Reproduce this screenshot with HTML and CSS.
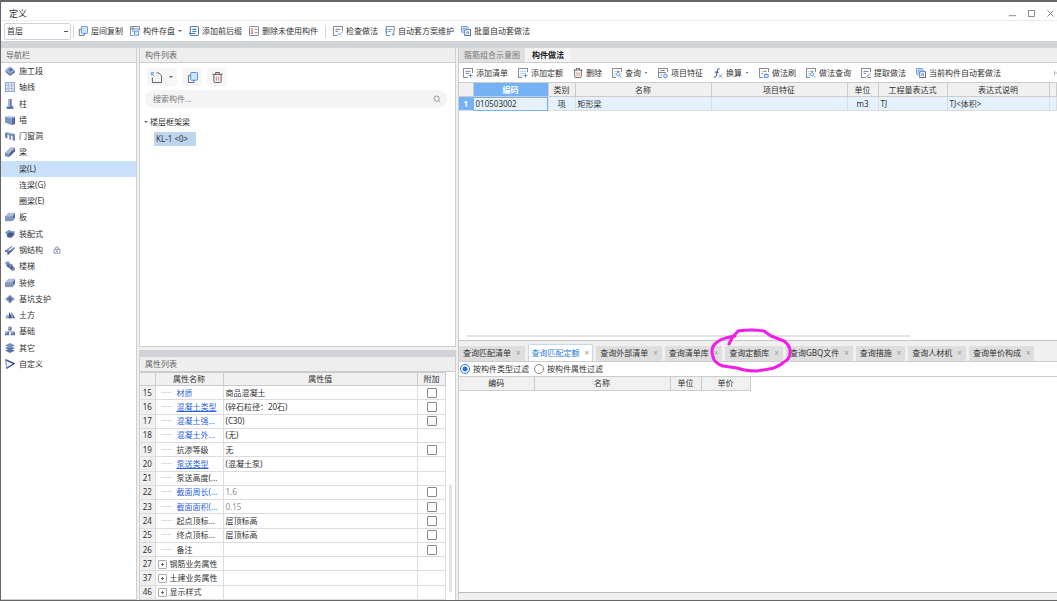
FILE: index.html
```html
<!DOCTYPE html>
<html lang="zh-CN">
<head>
<meta charset="utf-8">
<title>定义</title>
<link rel="stylesheet" href="styles.css">
</head>
<body>
<svg class="defs" aria-hidden="true">
  <symbol id="copy" viewBox="0 0 12 12"><path d="M3.500 4H1.500v7.500h6V9.500" fill="none" stroke="#4b5d78"/><rect x="4" y=".5" width="7.500" height="8.500" rx="1" fill="#cfe3fb" stroke="#3f86dc"/></symbol>
  <symbol id="save" viewBox="0 0 12 12"><path d="M4 11.500H.5V.5h11V5M.5 3.500h11M3.500.500v7" fill="none" stroke="#5a6f8e"/><rect x="5.500" y="6" width="5" height="5" fill="#dcebfc" stroke="#3f86dc"/></symbol>
  <symbol id="lines" viewBox="0 0 12 12"><rect x="1.500" y=".5" width="10" height="11" rx="1" fill="#fff" stroke="#34507c"/><path d="M4 4h5M4 6.500h5M0 9h8" stroke="#2f80e0" stroke-width="1.300"/></symbol>
  <symbol id="unused" viewBox="0 0 12 12"><rect x=".5" y=".5" width="11" height="11" rx="1" fill="#fff" stroke="#5d6675"/><path d="M2.500 3.500h2.500M2.500 6h2.500M2.500 8.500h2.500" stroke="#d64545" stroke-width="1.300"/><path d="M7 4h3M7 8h3" stroke="#5d6675"/></symbol>
  <symbol id="check" viewBox="0 0 12 12"><path d="M5.500 11.500H.5V.5h11V6M3 4h6M3 6.500h3" fill="none" stroke="#5d6675"/><path d="M5.500 8.500l2 2L11.500 7" fill="none" stroke="#3f86dc"/></symbol>
  <symbol id="auto" viewBox="0 0 12 12"><path d="M6 11.500H1.500V.5h9.500v6M4 4h5M4 6.500h3" fill="none" stroke="#5a6f8e"/><path d="M0 4h3M0 7h3M10 6v5M8 9l2 2 2-2" fill="none" stroke="#3f86dc"/></symbol>
  <symbol id="batch" viewBox="0 0 12 12"><path d="M.5 8V.500H8M2.500 9V2.500H10" fill="none" stroke="#3f86dc"/><rect x="4.500" y="4.500" width="7" height="7" fill="#fff" stroke="#4b5d78"/><path d="M7 10V7h2v3" fill="none" stroke="#3f86dc"/></symbol>
  <symbol id="addlist" viewBox="0 0 12 12"><path d="M6 11.500H.5V.5h11V6M3 4h6M3 6.500h4" fill="none" stroke="#5d6675"/><path d="M9 6.500v5M6.500 9h5" stroke="#3f86dc"/></symbol>
  <symbol id="addquota" viewBox="0 0 12 12"><path d="M5 11.500H.5V.5h11V5" fill="none" stroke="#5d6675"/><path d="M3 4h7M3 6.500h5M3 9h2" stroke="#3f86dc" stroke-dasharray="1 1"/><path d="M9 6.500v5M6.500 9h5" stroke="#3f86dc"/></symbol>
  <symbol id="trash" viewBox="0 0 12 12"><path d="M.5 2.500h11M4 2.500v-2h4v2M2 2.500v7.500q0 1.500 1.500 1.500h5q1.500 0 1.500-1.500V2.500" fill="none" stroke="#55504f"/><path d="M4.700 5v4.500M7.300 5v4.500" stroke="#dd6b6b"/></symbol>
  <symbol id="find" viewBox="0 0 12 12"><path d="M5 11.500H.5V.5h11V5M3 4h1M5.500 4H9M3 6.500h1M3 9h1" fill="none" stroke="#5d6675"/><circle cx="7.500" cy="7.500" r="2" fill="#fff" stroke="#3f86dc"/><path d="M9 9l2.500 2.500" stroke="#3f86dc"/></symbol>
  <symbol id="feature" viewBox="0 0 12 12"><path d="M5 11.500H.5V.5h11V5M.5 5.500h9M3 3h5M3 8.500h2" fill="none" stroke="#5d6675"/><rect x="7" y="7.500" width="4" height="4" rx="1" fill="#dcebfc" stroke="#3f86dc"/></symbol>
  <symbol id="fx" viewBox="0 0 12 12"><path d="M8 1Q5.800 0 5.300 2.500L4 9.500q-.5 2-3 1.500M2 5h5" fill="none" stroke="#34507c" stroke-width="1.200"/><path d="M7 7.500l4 4M11 7.500l-4 4" stroke="#3f86dc"/></symbol>
  <symbol id="brush" viewBox="0 0 12 12"><path d="M5 11.500H.5V.5h11V5M3 4h1M5.500 4H9M3 6.500h2" fill="none" stroke="#5d6675"/><path d="M6 8h5.500M8.700 6v2M6.500 8v3.500H11V8" fill="#dcebfc" stroke="#3f86dc"/></symbol>
  <symbol id="extract" viewBox="0 0 12 12"><path d="M6 11.500H.5V.5h11V5M3 4h6M3 6.500h3" fill="none" stroke="#5d6675"/><path d="M6.500 11L11 6.500M8 11.500h3.500" stroke="#44546a"/></symbol>
  <symbol id="new" viewBox="0 0 12 12"><path d="M6 1h2.500L11.500 4v7.500h-10V6" fill="none" stroke="#44546a"/><path d="M0 1l3.500 3.500M0 4V1h3.500" fill="none" stroke="#2f80e0"/></symbol>
  <symbol id="search" viewBox="0 0 12 12"><circle cx="5.500" cy="5.500" r="4" fill="none" stroke="#8b8b8b" stroke-width="1.300"/><path d="M8.500 8.500L11 11" stroke="#8b8b8b" stroke-width="1.300"/></symbol>
  <symbol id="n-stage" viewBox="0 0 12 12"><path d="M0 7l6-6 6 5v2l-6 4z" fill="#6d83b0"/><path d="M0 5l5-4 3 2 4 2-6 4z" fill="#9db0d3"/><path d="M4 5l3-3 3 2-3 3z" fill="#5b74a8"/></symbol>
  <symbol id="n-axis" viewBox="0 0 12 12"><rect x=".5" y=".5" width="11" height="11" fill="#dce5f3" stroke="#8396bb"/><path d="M4 0v12M8 0v12M0 4h12M0 8h12" stroke="#a3b3d2"/></symbol>
  <symbol id="n-col" viewBox="0 0 12 12"><path d="M4 0h4v8l2 1v3H2V9l2-1z" fill="#5e76ac"/><path d="M4 0h2v9l-3 1-1-1 2-1z" fill="#a8b8d8"/></symbol>
  <symbol id="n-wall" viewBox="0 0 12 12"><path d="M0 2l8 2v8L0 9z" fill="#7d92c0"/><path d="M0 2l4-1 8 1-4 2z" fill="#b6c4de"/><path d="M8 4l4-2v9l-4 1z" fill="#556c9f"/></symbol>
  <symbol id="n-door" viewBox="0 0 12 12"><path d="M0 2l12 2v8l-3-1V6L7 5.500V11L5 10V5L3 4.500V9L0 8z" fill="#7388b6"/><path d="M0 2l2-1 10 2v1z" fill="#b6c4de"/></symbol>
  <symbol id="n-beam" viewBox="0 0 12 12"><path d="M0 7l7-7 5 1-7 7z" fill="#aab9d6"/><path d="M0 7l5 1v4l-5-1z" fill="#7489b5"/><path d="M5 8l7-7v4l-7 7z" fill="#485e8c"/></symbol>
  <symbol id="n-slab" viewBox="0 0 12 12"><path d="M0 5l4-4h8L9 5z" fill="#b0bfdb"/><path d="M0 5h9v6H0z" fill="#8196c1"/><path d="M9 5l3-4v6l-3 4z" fill="#5a70a2"/></symbol>
  <symbol id="n-pre" viewBox="0 0 12 12"><path d="M0 4l5-3 2 1 5 1-1 5-4 3-5-1V7z" fill="#8196c1"/><path d="M3 5l5-1 3 2-4 4-4-1z" fill="#435a8c"/></symbol>
  <symbol id="n-steel" viewBox="0 0 12 12"><path d="M0 7l8-6 1 1-7 6zM2 10l9-8 1 2-9 8z" fill="#8196c1"/><path d="M0 6l5 1 7-3-8 8-1-3-3-1z" fill="#5b72a3"/></symbol>
  <symbol id="n-stair" viewBox="0 0 12 12"><path d="M0 2l4-2 2 3 3 1 1 3 2 1v3l-3 1-4-4-3-2z" fill="#7d91bd"/><path d="M4 4l2 1-2 3-2-2zM8 6l2 1-2 4-3-3z" fill="#485e8c"/></symbol>
  <symbol id="n-pit" viewBox="0 0 12 12"><path d="M0 6l6-5 6 5-6 5z" fill="#8fa2c9"/><path d="M3 5h6v2H3zM5 3h2v7H5z" fill="#506798"/></symbol>
  <symbol id="n-earth" viewBox="0 0 12 12"><path d="M0 10l3-5 2 5zM5 10l3-8 4 8z" fill="#8ea0c7"/><path d="M4 10l1-8 2 4 1 4zM9 5l3 5h-2z" fill="#3f5688"/></symbol>
  <symbol id="n-base" viewBox="0 0 12 12"><path d="M4 1h4v4H4zM0 7h5v4H0zM7 7h5v4H7z" fill="#5b73a8"/><path d="M4 1h2v3H4zM0 7h3v2H0zM7 7h3v2H7zM4 5l4 0 1 2H3z" fill="#a0b2d4"/></symbol>
  <symbol id="n-other" viewBox="0 0 12 12"><path d="M0 9l3-1h6l3 1-6 3zM0 6l3-1h6l3 1-6 3z" fill="#5a72a5"/><path d="M0 3l6-3 6 3-6 3z" fill="#7b91bf"/></symbol>
  <symbol id="n-custom" viewBox="0 0 12 12"><path d="M1 1l10 4.500L2 11z" fill="#fff" stroke="#8ca0c6" stroke-width="1.500"/><path d="M1 1l10 4.500L2 11" fill="none" stroke="#415b91" stroke-width="1.500"/></symbol>
  <symbol id="lock" viewBox="0 0 12 12"><path d="M1.500 5h9v6h-9zM4 5V3q0-2 2-2t2 2v2M6 6.500v3M4.500 8h3" fill="none" stroke="#5a6b8f"/></symbol>
</svg>
<div class="window">
  <header class="titlebar">
    <h1>定义</h1>
    <div class="winbtns">
      <button aria-label="最小化"><svg viewBox="0 0 8 8"><path d="M0 6.500h8"/></svg></button>
      <button aria-label="最大化"><svg viewBox="0 0 8 8"><path d="M.5.500h7v7h-7z"/></svg></button>
      <button aria-label="关闭"><svg viewBox="0 0 8 8"><path d="M.5.500l7 7M7.500.500l-7 7"/></svg></button>
    </div>
  </header>
  <div class="toolbar main-tools">
    <select class="floor" aria-label="楼层"><option>首层</option></select>
    <i class="sep"></i>
    <button><svg><use href="#copy"/></svg>层间复制</button>
    <button><svg><use href="#save"/></svg>构件存盘<i class="caret"></i></button>
    <button><svg><use href="#lines"/></svg>添加前后缀</button>
    <button><svg><use href="#unused"/></svg>删除未使用构件</button>
    <i class="sep"></i>
    <button><svg><use href="#check"/></svg>检查做法</button>
    <button><svg><use href="#auto"/></svg>自动套方案维护</button>
    <button><svg><use href="#batch"/></svg>批量自动套做法</button>
  </div>
  <main class="body">
    <section class="panel nav">
      <h2>导航栏</h2>
      <ul>
        <li><svg><use href="#n-stage"/></svg>施工段</li>
        <li><svg><use href="#n-axis"/></svg>轴线</li>
        <li><svg><use href="#n-col"/></svg>柱</li>
        <li><svg><use href="#n-wall"/></svg>墙</li>
        <li><svg><use href="#n-door"/></svg>门窗洞</li>
        <li><svg><use href="#n-beam"/></svg>梁</li>
        <li class="child selected">梁(L)</li>
        <li class="child">连梁(G)</li>
        <li class="child">圈梁(E)</li>
        <li><svg><use href="#n-slab"/></svg>板</li>
        <li><svg><use href="#n-pre"/></svg>装配式</li>
        <li><svg><use href="#n-steel"/></svg>钢结构<svg class="lock"><use href="#lock"/></svg></li>
        <li><svg><use href="#n-stair"/></svg>楼梯</li>
        <li><svg><use href="#n-slab"/></svg>装修</li>
        <li><svg><use href="#n-pit"/></svg>基坑支护</li>
        <li><svg><use href="#n-earth"/></svg>土方</li>
        <li><svg><use href="#n-base"/></svg>基础</li>
        <li><svg><use href="#n-other"/></svg>其它</li>
        <li><svg><use href="#n-custom"/></svg>自定义</li>
      </ul>
    </section>
    <div class="middle">
      <section class="panel list">
        <h2>构件列表</h2>
        <div class="list-tools">
          <button class="wide" aria-label="新建"><svg><use href="#new"/></svg><i class="caret"></i></button>
          <button aria-label="复制"><svg><use href="#copy"/></svg></button>
          <button aria-label="删除"><svg><use href="#trash"/></svg></button>
        </div>
        <label class="search"><input type="text" placeholder="搜索构件..." aria-label="搜索构件"><svg><use href="#search"/></svg></label>
        <div class="tree"><i class="caret"></i>楼层框架梁</div>
        <div class="leaf">KL-1 &lt;0&gt;</div>
      </section>
      <section class="panel props">
        <h2>属性列表</h2>
        <div class="props-body">
        <table>
          <colgroup><col class="p-num"><col class="p-name"><col><col class="p-add"></colgroup>
          <thead><tr><th></th><th>属性名称</th><th>属性值</th><th>附加</th></tr></thead>
          <tbody>
          <tr><th>15</th><td class="name blue">材质</td><td>商品混凝土</td><td><input type="checkbox" aria-label="附加 材质"></td></tr>
          <tr><th>16</th><td class="name blue"><u>混凝土类型</u></td><td>(碎石粒径：20石)</td><td><input type="checkbox" aria-label="附加 混凝土类型"></td></tr>
          <tr><th>17</th><td class="name blue">混凝土强...</td><td>(C30)</td><td><input type="checkbox" aria-label="附加 混凝土强"></td></tr>
          <tr><th>18</th><td class="name blue">混凝土外...</td><td>(无)</td><td></td></tr>
          <tr><th>19</th><td class="name">抗渗等级</td><td>无</td><td><input type="checkbox" aria-label="附加 抗渗等级"></td></tr>
          <tr><th>20</th><td class="name blue"><u>泵送类型</u></td><td>(混凝土泵)</td><td></td></tr>
          <tr><th>21</th><td class="name">泵送高度(...</td><td></td><td></td></tr>
          <tr><th>22</th><td class="name blue">截面周长(...</td><td class="dim">1.6</td><td><input type="checkbox" aria-label="附加 截面周长"></td></tr>
          <tr><th>23</th><td class="name blue">截面面积(...</td><td class="dim">0.15</td><td><input type="checkbox" aria-label="附加 截面面积"></td></tr>
          <tr><th>24</th><td class="name">起点顶标...</td><td>层顶标高</td><td><input type="checkbox" aria-label="附加 起点顶标"></td></tr>
          <tr><th>25</th><td class="name">终点顶标...</td><td>层顶标高</td><td><input type="checkbox" aria-label="附加 终点顶标"></td></tr>
          <tr><th>26</th><td class="name">备注</td><td></td><td><input type="checkbox" aria-label="附加 备注"></td></tr>
          <tr><th>27</th><td class="group"><button aria-label="展开"></button>钢筋业务属性</td><td></td><td></td></tr>
          <tr><th>37</th><td class="group"><button aria-label="展开"></button>土建业务属性</td><td></td><td></td></tr>
          <tr><th>46</th><td class="group"><button aria-label="展开"></button>显示样式</td><td></td><td></td></tr>
          </tbody>
        </table>
        <i class="vbar"></i>
        </div>
      </section>
    </div>
    <div class="right">
      <section class="work">
        <div class="toptabs"><button>箍筋组合示意图</button><button class="on">构件做法</button></div>
        <div class="toolbar work-tools">
          <button><svg><use href="#addlist"/></svg>添加清单</button>
          <button><svg><use href="#addquota"/></svg>添加定额</button>
          <button><svg><use href="#trash"/></svg>删除</button>
          <button><svg><use href="#find"/></svg>查询<i class="caret"></i></button>
          <button><svg><use href="#feature"/></svg>项目特征</button>
          <button><svg><use href="#fx"/></svg>换算<i class="caret"></i></button>
          <button><svg><use href="#brush"/></svg>做法刷</button>
          <button><svg><use href="#find"/></svg>做法查询</button>
          <button><svg><use href="#extract"/></svg>提取做法</button>
          <button><svg><use href="#batch"/></svg>当前构件自动套做法</button>
          <button class="more" aria-label="更多"><svg viewBox="0 0 4 8"><path d="M.5 1v6M.5 4H4"/></svg></button>
        </div>
        <table class="grid">
          <colgroup><col class="g-num"><col class="g-code"><col class="g-kind"><col class="g-name"><col class="g-name"><col class="g-unit"><col class="g-expr"><col class="g-desc"><col></colgroup>
          <thead><tr><th></th><th class="cur">编码</th><th>类别</th><th>名称</th><th>项目特征</th><th>单位</th><th>工程量表达式</th><th>表达式说明</th><th></th></tr></thead>
          <tbody><tr><th class="cur">1</th><td class="focus">010503002</td><td class="mid">项</td><td>矩形梁</td><td></td><td class="mid">m3</td><td>TJ</td><td>TJ&lt;体积&gt;</td><td></td></tr></tbody>
        </table>
        <i class="hbar"></i>
      </section>
      <section class="query">
        <div class="tabs">
          <button>查询匹配清单<i>×</i></button>
          <button class="on">查询匹配定额<i>×</i></button>
          <button>查询外部清单<i>×</i></button>
          <button>查询清单库<i>×</i></button>
          <button class="marked">查询定额库<i>×</i>
            <svg class="mark" viewBox="0 0 84 46" aria-hidden="true"><path d="M20 16L23 10 29 3Q42 1 55 3L62 8 75 13Q82 18 81 25 81 31 75 34 68 40 60 41L48 43Q36 43 28 40L14 38Q5 35 4 29 1 20 7 15 12 10 26 8"/></svg>
          </button>
          <button>查询GBQ文件<i>×</i></button>
          <button>查询措施<i>×</i></button>
          <button>查询人材机<i>×</i></button>
          <button>查询单价构成<i>×</i></button>
        </div>
        <div class="result">
          <div class="filters">
            <label><input type="radio" name="f" checked>按构件类型过滤</label>
            <label><input type="radio" name="f">按构件属性过滤</label>
          </div>
          <table class="heads">
            <colgroup><col class="g-code"><col class="g-name"><col class="g-unit"><col class="q-price"></colgroup>
            <thead><tr><th>编码</th><th>名称</th><th>单位</th><th>单价</th></tr></thead>
          </table>
        </div>
      </section>
    </div>
  </main>
</div>
</body>
</html>
```
FILE: styles.css
```css
* { box-sizing: border-box; }
body {
  margin: 0;
  background: #5c5c5c;
  color: #333;
  font: 8px/12px "Noto Sans", "Noto Sans CJK SC", sans-serif;
}
h1, h2, ul { margin: 0; padding: 0; font-size: 8px; font-weight: normal; list-style: none; }
button, input, select { margin: 0; padding: 0; border: 0; background: none; color: inherit; font: inherit; }
i { font-style: normal; }
.defs { position: absolute; width: 0; height: 0; }

.window {
  display: flex;
  flex-direction: column;
  height: 100vh;
  border: solid #666;
  border-width: 2px 0 1px 1px;
  background: #f0f0f0;
}
.titlebar {
  display: flex;
  justify-content: space-between;
  align-items: center;
  height: 19px;
  padding: 5px 3px 0 8px;
  background: #fff;
  border-bottom: 1px solid #ececec;
  border-radius: 5px 0 0 0;
}
.titlebar h1 { font-size: 9px; }
.winbtns { display: flex; gap: 12px; }
.winbtns svg { display: block; width: 7px; height: 7px; fill: none; stroke: #777; }

.toolbar { display: flex; align-items: center; background: #fff; white-space: nowrap; overflow: hidden; }
.toolbar button { display: flex; flex: none; align-items: center; gap: 3px; }
.toolbar svg { width: 10px; height: 10px; }
.main-tools { flex: none; height: 20px; gap: 7px; padding-left: 3px; }
.floor {
  width: 67px;
  height: 17px;
  padding-left: 2px;
  border: 1px solid #d4d4d4;
  border-radius: 2px;
  appearance: none;
  background: linear-gradient(#555, #555) 59px 7px / 4px 1px no-repeat;
}
.sep { width: 1px; height: 13px; background: #d8d8d8; }
.floor + .sep { margin: 0 -3px 0 -5px; }
.caret { flex: none; width: 4px; height: 2px; background: #666; clip-path: polygon(0 0, 100% 0, 50% 100%); }

.body {
  display: grid;
  grid-template-columns: 136px 317px minmax(0, 1fr);
  gap: 2px;
  flex: 1;
  min-height: 0;
  border-top: 7px solid #d1d4d9;
}
.panel { background: #fff; border: 1px solid #d0d0d0; border-top: 0; }
.panel h2 {
  height: 15px;
  padding-left: 5px;
  background: #eee;
  border-bottom: 1px solid #ccc;
  color: #666;
  line-height: 14px;
}

.nav { border-left: 0; }
.nav ul { display: grid; grid-auto-rows: 1fr; height: 309px; }
.nav li { display: flex; align-items: center; gap: 4px; padding-left: 4px; }
.nav li svg { width: 10px; height: 10px; }
.nav li.child { padding-left: 18px; }
.nav li.selected { background: #c8e0f9; }
.nav li svg.lock { width: 8px; height: 8px; margin-left: 6px; }

.middle { display: flex; flex-direction: column; min-height: 0; }
.list { flex: 1; min-height: 0; }
.list-tools { display: flex; gap: 5px; margin: 5px 7px 4px; }
.list-tools button {
  display: flex;
  align-items: center;
  justify-content: center;
  width: 20px;
  height: 18px;
  border-radius: 2px;
  background: #f6f6f6;
}
.list-tools .wide { width: 30px; gap: 7px; }
.list-tools svg { width: 11px; height: 11px; }
.search {
  display: flex;
  align-items: center;
  height: 18px;
  margin: 0 8px 0 5px;
  padding: 0 6px 0 8px;
  border-radius: 9px;
  background: #f4f4f4;
}
.search input { flex: 1; min-width: 0; outline: 0; }
.search input::placeholder { color: #777; opacity: 1; }
.search svg { width: 8px; height: 8px; }
.tree { display: flex; align-items: center; gap: 2px; margin: 8px 0 4px 4px; }
.leaf { width: 42px; height: 14px; margin-left: 14px; padding-left: 2px; border-radius: 1px; background: #bcd6f0; line-height: 14px; }

.props { margin-top: 3px; border-top: 7px solid #d1d3d9; border-bottom: 0; }
.props-body { display: flex; gap: 3px; }
table { border-collapse: collapse; table-layout: fixed; }
th, td { padding: 0 2px; border: 1px solid #dcdcdc; font-weight: normal; text-align: left; white-space: nowrap; overflow: hidden; line-height: 12px; }
thead th { padding: 0; background: #f0f0f0; border-color: #ccc; text-align: center; }
.props table { width: 306px; height: 228px; flex: none; }
.props th:first-child { padding: 0; background: #f0f0f0; border-left: 0; text-align: center; }
.p-num { width: 15px; }
.p-name { width: 68px; }
.p-add { width: 28px; }
.props td:last-child { text-align: center; padding: 0; }
.props input {
  display: block;
  width: 10px;
  height: 10px;
  margin: auto;
  border: 1px solid #888;
  border-radius: 1px;
  appearance: none;
  background: #fff;
}
.name::before { content: ""; display: inline-block; width: 11px; height: 1px; margin: 0 5px 3px 3px; background: #ddd; }
.blue { color: #2b65e0; }
.dim { color: #909090; }
.group button {
  width: 9px;
  height: 9px;
  margin: 0 3px 0 0;
  border: 1px solid #aaa;
  border-radius: 1px;
  vertical-align: -1px;
  background:
    linear-gradient(#666, #666) center / 3px 1px no-repeat,
    linear-gradient(#666, #666) center / 1px 3px no-repeat;
}
.vbar { width: 3px; margin: 112px 0 8px; border-radius: 2px; background: #e2e2e2; }

.right { display: flex; flex-direction: column; min-width: 0; border-left: 1px solid #ccc; }
.work { display: flex; flex-direction: column; flex: 296 1 0; min-height: 0; background: #fff; border-bottom: 1px solid #c6c6c6; }
.toptabs { display: flex; flex: none; height: 15px; background: #eee; border-bottom: 1px solid #ccc; }
.toptabs button { padding: 0 5px; background: #e0e0e0; color: #777; }
.toptabs .on { padding: 0 7px; background: #f4f4f4; color: #222; font-weight: bold; }
.work-tools { flex: none; height: 19px; gap: 10px; padding-left: 4px; }
.work-tools .more { margin-left: auto; }
.more svg { width: 3px; height: 6px; fill: none; stroke: #999; }
.grid { width: 100%; }
.grid tr { height: 14px; }
.grid th, .grid td { border-left: 0; }
.grid tbody tr { background: #e5f2fe; }
.grid .cur { background: #75b2f5; color: #fff; font-weight: bold; padding: 0; text-align: center; }
.grid .focus { outline: 1px solid #75b2f5; outline-offset: -1px; }
.grid .mid { text-align: center; }
.g-num { width: 14px; }
.g-code { width: 75px; }
.g-kind { width: 27px; }
.g-name { width: 136px; }
.g-unit { width: 31px; }
.g-expr { width: 69px; }
.g-desc { width: 102px; }
.q-price { width: 49px; }
.hbar { width: 74%; height: 2px; margin: auto 0 3px 8px; background: #e3e3e3; }

.query { display: flex; flex-direction: column; flex: 256 1 0; padding-bottom: 7px; }
.tabs { display: flex; align-items: flex-end; gap: 3px; height: 20px; margin-top: 1px; border-bottom: 1px solid #ccc; white-space: nowrap; }
.tabs button { display: flex; flex: none; align-items: center; gap: 5px; height: 15px; padding: 0 4px; border-radius: 1px; background: #dedede; }
.tabs i { color: #999; }
.tabs .on { height: 17px; border: 1px solid #c5d8ec; border-bottom: 0; padding: 0 3px; border-radius: 2px 2px 0 0; background: #fff; color: #2a7de0; }
.marked { position: relative; }
.mark { position: absolute; z-index: 2; left: -16px; top: -18px; width: 84px; height: 46px; fill: none; stroke: #f01ee6; stroke-width: 3; stroke-linejoin: round; stroke-linecap: round; }
.result { flex: 1; background: #fff; border-bottom: 1px solid #bbb; }
.filters { display: flex; gap: 5px; height: 15px; padding-left: 1px; border-bottom: 1px solid #ccc; }
.filters label { display: flex; align-items: center; gap: 3px; }
.filters input { width: 10px; height: 10px; border: 1px solid #888; border-radius: 50%; appearance: none; background: #fff; }
.filters input:checked { border-color: #2a75d0; background: radial-gradient(#2a75d0 2px, #fff 3px); }
.heads { width: 291px; }
.heads tr { height: 14px; }
.heads th { border-left: 0; border-top: 0; }
```
